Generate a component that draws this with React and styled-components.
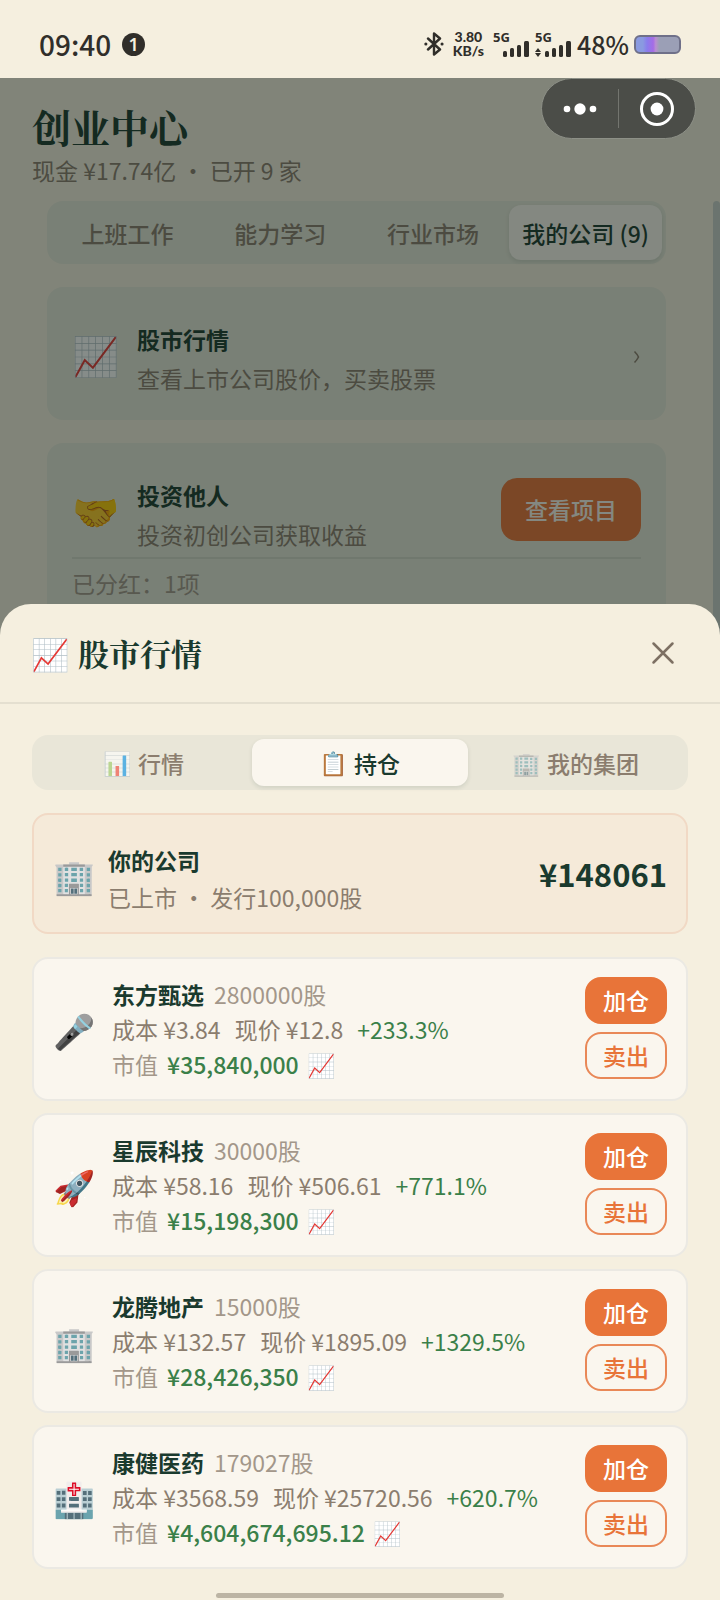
import React from "react";
import styled, { createGlobalStyle, css } from "styled-components";

const sans = `"Noto Sans CJK SC", "Noto Sans", sans-serif`;
const serif = `"Noto Serif CJK SC", "Noto Serif SC", "Source Han Serif SC", "Noto Sans CJK SC", serif`;

const color = {
  paper: "#f5efdf",
  ink: "#1a3a2e",
  muted: "#8b7d6e",
  faint: "#a3978a",
  orange: "#e87439",
  green: "#3a8049",
  card: "#faf6ee",
  status: "#302e2a",
};

const GlobalStyle = createGlobalStyle`
  * { box-sizing: border-box; }
  body { margin: 0; background: ${color.paper}; font-family: ${sans}; }
  button { font: inherit; border: 0; margin: 0; padding: 0; background: none; cursor: pointer; }
  h1, h2, h3, p, ul { margin: 0; padding: 0; }
  ul { list-style: none; }
`;

const Screen = styled.div`
  position: relative;
  min-height: 100vh;
  display: flex;
  flex-direction: column;
  overflow: hidden;
  color: ${color.ink};
`;

/* ---------- status bar ---------- */

const StatusBar = styled.header`
  height: 78px;
  padding: 10px 39px 0;
  display: flex;
  align-items: center;
  justify-content: space-between;
  background: ${color.paper};
  color: ${color.status};
`;

const StatusGroup = styled.div`
  display: flex;
  align-items: center;
  gap: ${(p) => p.$gap}px;
`;

const Clock = styled.span`
  font-size: 28px;
  line-height: 32px;
  font-weight: 500;
`;

const Count = styled.span`
  width: 23px;
  height: 23px;
  border-radius: 50%;
  background: ${color.status};
  color: ${color.paper};
  font-family: "Noto Sans", sans-serif;
  font-size: 18px;
  line-height: 23px;
  font-weight: 600;
  text-align: center;
`;

const Speed = styled.span`
  display: flex;
  flex-direction: column;
  align-items: center;
  font-family: Lato, sans-serif;
  font-size: 14px;
  line-height: 14px;
  font-weight: 900;
`;

const SignalBox = styled.span`
  display: flex;
  flex-direction: column;
  width: 37px;
  font-family: "Noto Sans", sans-serif;
  font-size: 13px;
  line-height: 10px;
  font-weight: 700;
  svg { display: block; margin-top: -2px; }
`;

const Percent = styled.span`
  font-size: 25px;
  line-height: 32px;
  font-weight: 500;
`;

const Battery = styled.span`
  width: 47px;
  height: 19px;
  border: 2px solid #6f7089;
  border-radius: 6px;
  background: linear-gradient(90deg, #8a9ae0 0 16%, #8a7cec 26%, #a56ce6 40%, #b98fd0 46%, #9b9fb6 54%);
`;

function Signal({ data }) {
  return (
    <SignalBox>
      5G
      <svg width="37" height="17" viewBox="0 0 37 17" fill="currentColor">
        {data && <path d="M0 12l3-4 3 4zM0 13l3 4 3-4z" />}
        <rect x="10" y="11" width="4" height="6" rx="1.5" />
        <rect x="17" y="8" width="4" height="9" rx="1.5" />
        <rect x="24" y="5" width="4" height="12" rx="1.5" />
        <rect x="31" y="1" width="5" height="16" rx="1.5" />
      </svg>
    </SignalBox>
  );
}

function Bluetooth() {
  return (
    <svg width="20" height="24" viewBox="0 0 20 24" fill="none" stroke="currentColor" strokeWidth="2.4" strokeLinejoin="round" strokeLinecap="round">
      <path d="M4 6.500L16 17.500l-6 5V1.500L16 6.500 4 17.500" />
      <path d="M1.800 12h.1M18 12h.1" strokeWidth="3" />
    </svg>
  );
}

/* ---------- mini-program capsule ---------- */

const Capsule = styled.div`
  position: absolute;
  z-index: 3;
  top: 78px;
  right: 24px;
  width: 155px;
  height: 61px;
  display: flex;
  align-items: center;
  border: 1px solid #8d9087;
  border-radius: 31px;
  background: #4b4d48;
`;

const CapsuleButton = styled.button`
  flex: 1;
  height: 39px;
  display: flex;
  align-items: center;
  justify-content: center;
  color: #fff;
  & + & { border-left: 1px solid #73756f; }
`;

/* ---------- page behind the sheet ---------- */

const Page = styled.main`
  flex: 1;
  display: flex;
  flex-direction: column;
`;

const PageHeader = styled.div`
  padding: 25px 32px 14px;
`;

const PageTitle = styled.h1`
  font-family: ${serif};
  font-size: 39px;
  line-height: 46px;
  font-weight: 700;
`;

const PageNote = styled.p`
  margin-top: 4px;
  font-size: 23px;
  line-height: 34px;
  color: ${color.muted};
`;

const PageScroll = styled.div`
  flex: 1;
  display: flex;
`;

const PageBody = styled.div`
  flex: 1;
  padding: 0 47px;
  display: flex;
  flex-direction: column;
  gap: 23px;
`;

const ScrollThumb = styled.div`
  width: 7px;
  border-radius: 4px 4px 0 0;
  background: #c9cfca;
`;

const TabBar = styled.div`
  display: flex;
  padding: 4px;
  border-radius: 16px;
  background: ${(p) => (p.$tint ? "#e5e6d8" : "#e9e6d8")};
`;

const TabButton = styled.button`
  flex: 1;
  height: ${(p) => p.$height}px;
  display: flex;
  align-items: center;
  justify-content: center;
  gap: 7px;
  border-radius: 12px;
  font-size: 23px;
  line-height: 34px;
  font-weight: 500;
  white-space: nowrap;
  color: ${color.muted};
  ${(p) =>
    p.$active &&
    css`
      color: ${color.ink};
      background: ${color.card};
      box-shadow: 0 2px 4px rgba(26, 58, 46, 0.12);
    `}
`;

const Panel = styled.section`
  padding: 31px 25px 24px;
  border-radius: 16px;
  background: #e5e6d8;
`;

const Row = styled.div`
  display: flex;
  align-items: center;
  gap: ${(p) => p.$gap}px;
`;

const Texts = styled.div`
  flex: 1;
  min-width: 0;
  padding-top: 4px;
  display: flex;
  flex-direction: column;
  gap: ${(p) => p.$gap}px;
`;

const Name = styled.h3`
  font-size: 23px;
  line-height: 35px;
  font-weight: 700;
  color: ${color.ink};
`;

const Note = styled.p`
  font-size: 23px;
  line-height: 35px;
  color: ${color.muted};
`;

const PanelFooter = styled.p`
  margin-top: 5px;
  padding-top: 7px;
  border-top: 2px solid #d3d6c9;
  font-size: 23px;
  line-height: 34px;
  color: ${color.faint};
`;

const PanelAction = styled.button`
  align-self: flex-start;
  margin-top: 4px;
  padding: 14px 24px;
  border-radius: 16px;
  background: ${color.orange};
  color: ${color.card};
  font-size: 23px;
  line-height: 35px;
  font-weight: 500;
`;

const EmojiBox = styled.span`
  flex: none;
  width: ${(p) => p.$box}px;
  height: ${(p) => p.$box}px;
  padding-top: ${(p) => (p.$low ? 4 : 0)}px;
  display: inline-flex;
  align-items: center;
  justify-content: center;
  font-family: "Noto Color Emoji", sans-serif;
  font-size: ${(p) => p.$size}px;
  line-height: 1;
  opacity: ${(p) => (p.$dim ? 0.6 : 1)};
`;

function Emoji({ box, size, dim, low, children }) {
  return (
    <EmojiBox $box={box} $size={size} $dim={dim} $low={low} aria-hidden="true">
      {children}
    </EmojiBox>
  );
}

/* ---------- bottom sheet ---------- */

const Overlay = styled.div`
  position: absolute;
  z-index: 2;
  inset: 78px 0 0;
  display: flex;
  flex-direction: column;
  justify-content: flex-end;
  background: rgba(13, 25, 20, 0.5);
`;

const Sheet = styled.section`
  position: relative;
  border-radius: 31px 31px 0 0;
  background: ${color.paper};
`;

const SheetHeader = styled.div`
  height: 100px;
  padding: 0 32px;
  display: flex;
  align-items: center;
  gap: 9px;
  border-bottom: 2px solid #e4dfd0;
`;

const SheetTitle = styled.h2`
  flex: 1;
  font-family: ${serif};
  font-size: 31px;
  line-height: 46px;
  font-weight: 700;
`;

const CloseButton = styled.button`
  width: 50px;
  height: 50px;
  display: flex;
  align-items: center;
  justify-content: center;
  color: #7d7063;
`;

const SheetBody = styled.div`
  padding: 31px 32px;
  display: flex;
  flex-direction: column;
  gap: 23px;
`;

const OwnCompany = styled.div`
  padding: 24px 19px 17px 21px;
  border: 2px solid #f1d9c5;
  border-radius: 16px;
  background: #f5ead9;
`;

const BigPrice = styled.strong`
  padding-bottom: 6px;
  font-size: 31px;
  line-height: 46px;
  font-weight: 700;
`;

const Holdings = styled.ul`
  display: flex;
  flex-direction: column;
  gap: 12px;
`;

const Holding = styled.li`
  padding: 18px 19px 17px 21px;
  display: flex;
  align-items: center;
  gap: 18px;
  border: 2px solid #ebe9e3;
  border-radius: 16px;
  background: ${color.card};
`;

const HoldingInfo = styled.div`
  flex: 1;
  min-width: 0;
`;

const Line = styled.div`
  display: flex;
  align-items: center;
  gap: ${(p) => p.$gap}px;
  font-size: 23px;
  line-height: 35px;
  white-space: nowrap;
  color: ${(p) => (p.$faint ? color.faint : color.muted)};
`;

const Gain = styled.span`
  color: ${color.green};
  font-weight: ${(p) => (p.$strong ? 500 : 400)};
`;

const Actions = styled.div`
  align-self: flex-start;
  display: flex;
  flex-direction: column;
  gap: 8px;
`;

const TradeButton = styled.button`
  width: 82px;
  height: 47px;
  border: 2px solid ${(p) => (p.$filled ? color.orange : "#e98857")};
  border-radius: 16px;
  font-size: 23px;
  line-height: 35px;
  font-weight: 500;
  background: ${(p) => (p.$filled ? color.orange : "transparent")};
  color: ${(p) => (p.$filled ? "#fff" : color.orange)};
`;

const HomeIndicator = styled.div`
  position: absolute;
  bottom: 2px;
  left: 30%;
  right: 30%;
  height: 5px;
  border-radius: 3px;
  background: #bcb4a4;
`;

const pageTabs = ["上班工作", "能力学习", "行业市场", "我的公司 (9)"];

const sheetTabs = [
  { icon: "📊", label: "行情" },
  { icon: "📋", label: "持仓" },
  { icon: "🏢", label: "我的集团" },
];

const holdings = [
  { icon: "🎤", name: "东方甄选", shares: "2800000", cost: "3.84", price: "12.8", gain: "+233.3%", value: "35,840,000" },
  { icon: "🚀", name: "星辰科技", shares: "30000", cost: "58.16", price: "506.61", gain: "+771.1%", value: "15,198,300" },
  { icon: "🏢", name: "龙腾地产", shares: "15000", cost: "132.57", price: "1895.09", gain: "+1329.5%", value: "28,426,350" },
  { icon: "🏥", name: "康健医药", shares: "179027", cost: "3568.59", price: "25720.56", gain: "+620.7%", value: "4,604,674,695.12" },
];

export default function App() {
  return (
    <Screen lang="zh-CN">
      <GlobalStyle />
      <StatusBar>
        <StatusGroup $gap={11}>
          <Clock>09:40</Clock>
          <Count>1</Count>
        </StatusGroup>
        <StatusGroup $gap={5}>
          <StatusGroup $gap={9}>
            <Bluetooth />
            <Speed>
              <span>3.80</span>
              <span>KB/s</span>
            </Speed>
            <Signal />
          </StatusGroup>
          <Signal data />
          <Percent>48%</Percent>
          <Battery />
        </StatusGroup>
      </StatusBar>

      <Capsule>
        <CapsuleButton type="button" aria-label="更多">
          <svg width="34" height="12" viewBox="0 0 34 12" fill="currentColor">
            <circle cx="4" cy="6" r="3.300" />
            <circle cx="17" cy="6" r="5.700" />
            <circle cx="30" cy="6" r="3.300" />
          </svg>
        </CapsuleButton>
        <CapsuleButton type="button" aria-label="关闭小程序">
          <svg width="36" height="36" viewBox="0 0 36 36">
            <circle cx="18" cy="18" r="15.500" fill="none" stroke="currentColor" strokeWidth="3" />
            <circle cx="18" cy="18" r="6.400" fill="currentColor" />
          </svg>
        </CapsuleButton>
      </Capsule>

      <Page>
        <PageHeader>
          <PageTitle>创业中心</PageTitle>
          <PageNote>现金 ¥17.74亿 · 已开 9 家</PageNote>
        </PageHeader>
        <PageScroll>
          <PageBody>
            <TabBar $tint role="tablist">
              {pageTabs.map((label, i) => (
                <TabButton key={label} type="button" role="tab" $height={55} $active={i === 3} aria-selected={i === 3}>
                  {label}
                </TabButton>
              ))}
            </TabBar>
            <Panel>
              <Row $gap={16}>
                <Emoji box={49} size={38}>📈</Emoji>
                <Texts $gap={4}>
                  <Name>股市行情</Name>
                  <Note>查看上市公司股价，买卖股票</Note>
                </Texts>
                <svg width="8" height="14" viewBox="0 0 8 14" fill="none" stroke={color.muted} strokeWidth="1.600">
                  <path d="M1.500 1.500q2.500 2.500 4 5.500q-1.500 3-4 5.500" />
                </svg>
              </Row>
            </Panel>
            <Panel>
              <Row $gap={16}>
                <Emoji box={49} size={38}>🤝</Emoji>
                <Texts $gap={4}>
                  <Name>投资他人</Name>
                  <Note>投资初创公司获取收益</Note>
                </Texts>
                <PanelAction type="button">查看项目</PanelAction>
              </Row>
              <PanelFooter>已分红：1项</PanelFooter>
            </Panel>
          </PageBody>
          <ScrollThumb />
        </PageScroll>
      </Page>

      <Overlay>
        <Sheet role="dialog" aria-label="股市行情">
          <SheetHeader>
            <Emoji box={37} size={31} low>📈</Emoji>
            <SheetTitle>股市行情</SheetTitle>
            <CloseButton type="button" aria-label="关闭">
              <svg width="24" height="24" viewBox="0 0 24 24" fill="none" stroke="currentColor" strokeWidth="2.500" strokeLinecap="round">
                <path d="M2.500 2.500l19 19M21.500 2.500l-19 19" />
              </svg>
            </CloseButton>
          </SheetHeader>
          <SheetBody>
            <TabBar role="tablist">
              {sheetTabs.map(({ icon, label }, i) => (
                <TabButton key={label} type="button" role="tab" $height={47} $active={i === 1} aria-selected={i === 1}>
                  <Emoji box={27} size={23} low dim={i !== 1}>{icon}</Emoji>
                  {label}
                </TabButton>
              ))}
            </TabBar>
            <OwnCompany>
              <Row $gap={14}>
                <Emoji box={39} size={34}>🏢</Emoji>
                <Texts $gap={2}>
                  <Name>你的公司</Name>
                  <Note>已上市 · 发行100,000股</Note>
                </Texts>
                <BigPrice>¥148061</BigPrice>
              </Row>
            </OwnCompany>
            <Holdings>
              {holdings.map((h) => (
                <Holding key={h.name}>
                  <Emoji box={39} size={34} low>{h.icon}</Emoji>
                  <HoldingInfo>
                    <Line $gap={10} $faint>
                      <Name>{h.name}</Name>
                      <span>{h.shares}股</span>
                    </Line>
                    <Line $gap={14}>
                      <span>成本 ¥{h.cost}</span>
                      <span>现价 ¥{h.price}</span>
                      <Gain>{h.gain}</Gain>
                    </Line>
                    <Line $gap={9} $faint>
                      <span>市值</span>
                      <Gain $strong>¥{h.value}</Gain>
                      <Emoji box={27} size={23} low>📈</Emoji>
                    </Line>
                  </HoldingInfo>
                  <Actions>
                    <TradeButton type="button" $filled>加仓</TradeButton>
                    <TradeButton type="button">卖出</TradeButton>
                  </Actions>
                </Holding>
              ))}
            </Holdings>
          </SheetBody>
          <HomeIndicator />
        </Sheet>
      </Overlay>
    </Screen>
  );
}
